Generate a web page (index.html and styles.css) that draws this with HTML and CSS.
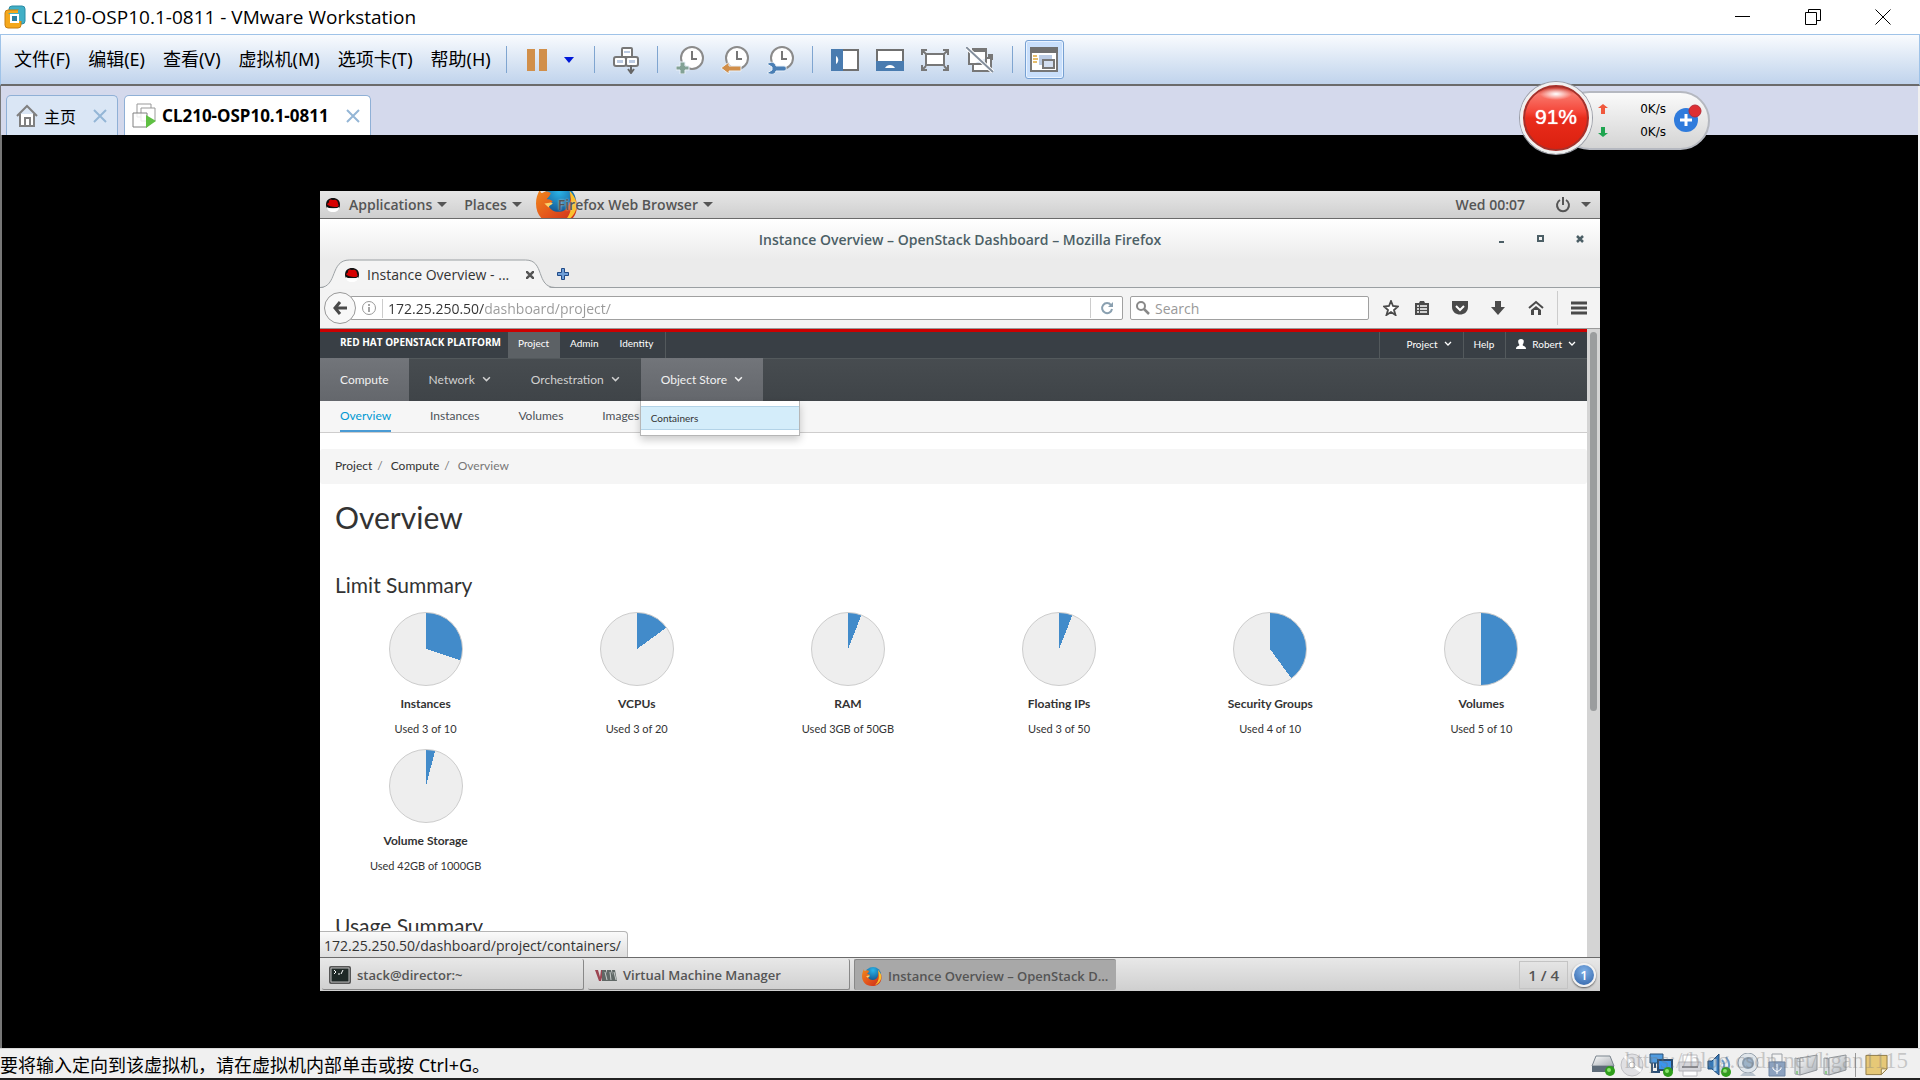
FILE: index.html
```html
<!DOCTYPE html>
<html lang="zh-CN">
<head>
    <meta charset="UTF-8">
    <meta name="viewport" content="width=device-width, initial-scale=1.0">
    <title>CL210-OSP10.1-0811 - VMware Workstation</title>
    <link rel="stylesheet" href="styles.css">
</head>
<body>
    <!-- Shared icons -->
    <svg class="defs" width="0" height="0" aria-hidden="true">
        <defs>
            <radialGradient id="foxGlobe" cx="0.5" cy="0.2" r="0.8">
                <stop offset="0" stop-color="#2bb5e8"/>
                <stop offset="1" stop-color="#0d3f7d"/>
            </radialGradient>
            <linearGradient id="foxTail" x1="0" y1="0" x2="1" y2="1">
                <stop offset="0" stop-color="#f08a1d"/>
                <stop offset="0.5" stop-color="#e4561b"/>
                <stop offset="1" stop-color="#c8281c"/>
            </linearGradient>
            <linearGradient id="metal" x1="0" y1="0" x2="1" y2="1">
                <stop offset="0" stop-color="#fafafa"/>
                <stop offset="1" stop-color="#a9afb5"/>
            </linearGradient>
        </defs>
        <symbol id="redhat" viewBox="0 0 14 14">
            <path d="M0 7C0 2 3 0 7 0s7 2 7 7c0 2-1 3-1 3H1S0 9 0 7z" fill="#111"/>
            <path d="M1 9c3 2 8 3 12 0 0 3-2 5-6 5s-6-2-6-5z" fill="#fff"/>
            <path d="M1 6c1-1 2-1 2-2 0-2 1-3 3-2l2 0c3-1 4 2 4 4 1 1 1 3-2 3C6 9 2 8 1 6z" fill="#d60000"/>
        </symbol>
        <symbol id="firefox" viewBox="0 0 20 20">
            <circle cx="11" cy="9" r="8" fill="url(#foxGlobe)"/>
            <path d="M2 3c0 1 0 2 1 2 1-1 3-1 4 0 0 1-1 2-2 3 1 0 2 0 3 1-1 1-2 1-2 2 1 3 5 4 8 2 2-2 3-5 2-8 2 2 2 4 3 3 2 7-2 12-9 12C4 20 0 16 0 10c0-3 1-5 2-7z" fill="url(#foxTail)"/>
            <path d="M16 4c2 2 4 5 3 9-1 3-3 5-6 6 3-3 5-6 3-15z" fill="#fbc02d"/>
            <path d="M4 10c2 0 3-1 4 0-1 1-2 1-2 2z" fill="#fbd26a"/>
        </symbol>
        <symbol id="clock" viewBox="0 0 28 28">
            <circle cx="16" cy="12" r="11" fill="#fff" stroke="#8b8b8b" stroke-width="2"/>
            <path d="M16 5v8h5" fill="none" stroke="#777" stroke-width="2"/>
        </symbol>
        <symbol id="chevron" viewBox="0 0 8 8">
            <path d="M1 2l3 3 3-3" fill="none" stroke="currentColor" stroke-width="1.3"/>
        </symbol>
        <symbol id="closeX" viewBox="0 0 14 14">
            <path d="M1 1l12 12M13 1L1 13" fill="none" stroke="currentColor" stroke-width="2"/>
        </symbol>
        <symbol id="led" viewBox="0 0 10 10">
            <circle cx="5" cy="5" r="5" fill="#2f9e1c"/>
            <circle cx="4" cy="4" r="2" fill="#8be86f"/>
        </symbol>
        <symbol id="folder" viewBox="0 0 24 24">
            <path d="M1 5l5 1v16l-5-1z" fill="#d8dde0" stroke="#989da2"/>
            <path d="M6 5l17-3v15L6 22z" fill="url(#metal)" stroke="#8f9499"/>
            <path d="M3 18v3" stroke="#8fc98a" stroke-width="2"/>
        </symbol>
    </svg>

    <!-- Window title -->
    <header class="titlebar">
        <svg class="app-icon" viewBox="0 0 22 24">
            <rect x="5" y="1" width="16" height="18" rx="3" fill="#41afc6" stroke="#2a8ba5"/>
            <rect x="1" y="5" width="16" height="18" rx="3" fill="#f5a81c" stroke="#c87f10"/>
            <path d="M4 8h10V5h4v11h-4" fill="#41afc6"/>
            <rect x="6" y="9" width="9" height="9" fill="#fff"/>
            <rect x="8" y="11" width="5" height="5" fill="#2c7fa1"/>
        </svg>
        <span class="window-title">CL210-OSP10.1-0811 - VMware Workstation</span>
        <div class="window-buttons">
            <button aria-label="Minimize"><svg viewBox="0 0 16 16"><path d="M0 7.500h15" stroke="#000"/></svg></button>
            <button aria-label="Restore"><svg viewBox="0 0 16 16"><path d="M.5 3.500h11v12H.5zM3.500 3V.5h12v11H12" fill="none" stroke="#000"/></svg></button>
            <button aria-label="Close"><svg viewBox="0 0 16 16"><path d="M.5.5l15 15M15.500.5l-15 15" stroke="#000"/></svg></button>
        </div>
    </header>

    <!-- Menu and toolbar -->
    <nav class="menubar">
        <div class="menus">
            <button>文件(F)</button>
            <button>编辑(E)</button>
            <button>查看(V)</button>
            <button>虚拟机(M)</button>
            <button>选项卡(T)</button>
            <button>帮助(H)</button>
        </div>
        <div class="tools tools-power">
            <button aria-label="Suspend"><svg width="20" height="22" viewBox="0 0 20 22"><path d="M0 0h8v22H0zM12 0h8v22h-8z" fill="#d18f4a"/></svg></button>
            <button aria-label="Power options"><svg width="10" height="6" viewBox="0 0 10 6"><path d="M0 0h10L5 6z" fill="#0018d8"/></svg></button>
        </div>
        <div class="tools">
            <button aria-label="Send Ctrl+Alt+Del"><svg width="26" height="28" viewBox="0 0 26 28"><g fill="#fff" stroke="#777" stroke-width="2"><rect x="9" y="2" width="10" height="9" rx="1"/><rect x="1" y="11" width="12" height="9" rx="2"/><rect x="13" y="11" width="12" height="9" rx="2"/></g><path d="M11 5h6v2h-6zM4 14h6v3H4zM16 14h6v3h-6z" fill="#bccbe2"/><path d="M18 19v7M15 23l3 4 3-4" fill="none" stroke="#666" stroke-width="2"/></svg></button>
        </div>
        <div class="tools">
            <button aria-label="Take snapshot"><svg width="28" height="28" viewBox="0 0 28 28"><use href="#clock"/><path d="M4 16h5v4h4v4H9v4H4v-4H0v-4h4z" fill="#83a295" stroke="#e8f0f8" stroke-width="1"/></svg></button>
            <button aria-label="Revert snapshot"><svg width="28" height="28" viewBox="0 0 28 28"><use href="#clock"/><path d="M0 22l8-6v4h12v5H8v3z" fill="#d18f4a" stroke="#e8f0f8" stroke-width="1"/></svg></button>
            <button aria-label="Manage snapshots"><svg width="28" height="28" viewBox="0 0 28 28"><use href="#clock"/><path d="M1 18c4-3 8-2 9 2h8c3 0 3 5 0 5h-8c-1 4-5 4-9 2l5-3v-3z" fill="#4a7fb5" stroke="#e8f0f8" stroke-width="1"/></svg></button>
        </div>
        <div class="tools">
            <button aria-label="Show library"><svg width="28" height="22" viewBox="0 0 28 22"><path d="M1 1h26v20H1z" fill="#fff" stroke="#707070" stroke-width="2"/><path d="M0 0h12v22H0z" fill="#4a7cb0"/><path d="M5 7c3 2 3 6 0 8z" fill="#fff"/></svg></button>
            <button aria-label="Show thumbnail bar"><svg width="28" height="22" viewBox="0 0 28 22"><path d="M1 1h26v20H1z" fill="#fff" stroke="#707070" stroke-width="2"/><path d="M0 12h28v10H0z" fill="#4a7cb0"/><path d="M9 19c2-4 8-4 10 0z" fill="#fff"/></svg></button>
            <button aria-label="Full screen"><svg width="28" height="22" viewBox="0 0 28 22"><path d="M5 5h18v11H5z" fill="#fff" stroke="#777" stroke-width="2"/><path d="M1 6V1h5M1 1l4 4M22 1h5v5M27 1l-4 4M1 16v5h5M1 21l4-4M22 21h5v-5M27 21l-4-4" fill="none" stroke="#777" stroke-width="2"/></svg></button>
            <button aria-label="Unity"><svg width="28" height="26" viewBox="0 0 28 26"><path d="M6 1h15v4H6zM22 7h5v6h-5z" fill="#777"/><path d="M3 4h17v13H3zM7 17v7h18V11h-5" fill="#fff" stroke="#777" stroke-width="2"/><path d="M0 0l27 25" stroke="#fff" stroke-width="4"/><path d="M0 0l27 25" stroke="#848f9c" stroke-width="2"/></svg></button>
        </div>
        <div class="tools">
            <button class="pressed" aria-label="Console view"><svg width="28" height="25" viewBox="0 0 28 25"><path d="M1 1h26v23H1z" fill="#fff" stroke="#777" stroke-width="2"/><path d="M0 0h28v6H0z" fill="#707070"/><path d="M3 9h4M3 12h5M3 15h4" stroke="#e5bd6c" stroke-width="2"/><path d="M9 8h13v10H9z" fill="#bccce4"/><path d="M13 13h11v8H13z" fill="#d3dff2" stroke="#777" stroke-width="2"/></svg></button>
        </div>
    </nav>

    <!-- VM tabs -->
    <div class="vm-tabs">
        <div class="vm-tab">
            <svg width="22" height="23" viewBox="0 0 22 23"><path d="M4 10v12h14V10" fill="#fff" stroke="#808080" stroke-width="2"/><path d="M1 12L11 2l10 10M9 22v-8h5v8" fill="none" stroke="#808080" stroke-width="2"/></svg>
            <a href="#">主页</a>
            <button aria-label="Close"><svg width="14" height="14"><use href="#closeX"/></svg></button>
        </div>
        <div class="vm-tab active">
            <svg width="24" height="25" viewBox="0 0 24 25"><path d="M5 1h14v13H5z" fill="#fff" stroke="#999"/><path d="M9 5h14v13H9z" fill="#fff" stroke="#999"/><path d="M1 10h14v14H1z" fill="#fff" fill-opacity=".8" stroke="#808080"/><path d="M14 12l10 6-10 7z" fill="#5fc043"/></svg>
            <a href="#">CL210-OSP10.1-0811</a>
            <button aria-label="Close"><svg width="14" height="14"><use href="#closeX"/></svg></button>
        </div>
    </div>

    <!-- Network speed widget -->
    <aside class="speed">
        <div class="speed-pill">
            <div class="speed-row">
                <svg width="10" height="10" viewBox="0 0 10 10"><path d="M5 0l5 4H7v6H3V4H0z" fill="#f0583c"/></svg>
                <span>0K/s</span>
            </div>
            <div class="speed-row">
                <svg width="10" height="10" viewBox="0 0 10 10"><path d="M5 10l5-4H7V0H3v6H0z" fill="#1fa550"/></svg>
                <span>0K/s</span>
            </div>
        </div>
        <div class="speed-ball">91%</div>
        <button class="speed-plus" aria-label="More"><svg viewBox="0 0 28 32"><circle cx="12" cy="18" r="12" fill="#2f7bdc"/><path d="M12 12v12M6 18h12" stroke="#fff" stroke-width="3"/><circle cx="21" cy="9" r="6" fill="#dd2f33" stroke="#b82a36"/></svg></button>
    </aside>

    <!-- Guest console -->
    <main class="console">
        <div class="guest">
            <div class="panel">
                <svg width="14" height="14"><use href="#redhat"/></svg>
                <button class="panel-apps">Applications</button>
                <button class="panel-places">Places</button>
                <button class="panel-browser">
                    <svg class="panel-fox" width="42" height="27" viewBox="0 4 20 13" preserveAspectRatio="none"><use href="#firefox" width="20" height="20"/></svg>
                    <span>Firefox Web Browser</span>
                </button>
                <span class="panel-clock">Wed 00:07</span>
                <button class="panel-power" aria-label="Power"><svg width="16" height="16" viewBox="0 0 16 16"><path d="M5 3a6 6 0 1 0 6 0M8 0v8" fill="none" stroke="#555" stroke-width="2"/></svg></button>
            </div>

            <div class="browser-top">
                <div class="browser-title">
                    <h1>Instance Overview – OpenStack Dashboard – Mozilla Firefox</h1>
                    <div class="browser-buttons">
                        <button aria-label="Minimize"><svg width="8" height="8" viewBox="0 0 8 8"><path d="M1 7h5" stroke="#4c5f66" stroke-width="2"/></svg></button>
                        <button aria-label="Maximize"><svg width="8" height="8" viewBox="0 0 8 8"><path d="M1 1h5v5H1z" fill="none" stroke="#4c5f66" stroke-width="2"/></svg></button>
                        <button aria-label="Close"><svg width="8" height="8" viewBox="0 0 8 8"><path d="M1 1l6 6M7 1L1 7" stroke="#4c5f66" stroke-width="2.500"/></svg></button>
                    </div>
                </div>
                <div class="browser-tabs">
                    <div class="browser-tab">
                        <svg class="tab-shape" viewBox="0 0 240 30" preserveAspectRatio="none"><path d="M0 29C16 29 10 1 30 1h180c20 0 12 28 28 28v2H0z" fill="#f4f4f4"/><path d="M0 28.500C18 28 10 1 30 1h180c20 0 10 27 30 27.500" fill="none" stroke="#9a9fa2"/></svg>
                        <svg width="14" height="14"><use href="#redhat"/></svg>
                        <a href="#">Instance Overview - ...</a>
                        <button aria-label="Close tab"><svg width="8" height="8" viewBox="0 0 8 8"><path d="M0 0l8 8M8 0L0 8" stroke="#555" stroke-width="2.500"/></svg></button>
                    </div>
                    <button aria-label="New tab"><svg width="12" height="12" viewBox="0 0 12 12"><path d="M4.500.5h3v4h4v3h-4v4h-3v-4h-4v-3h4z" fill="#6f9fd8" stroke="#204a87"/></svg></button>
                </div>
            </div>

            <div class="browser-nav">
                <button class="back" aria-label="Back"><svg width="16" height="16" viewBox="0 0 16 16"><path d="M8 2L3 8l5 6M3 8h12" fill="none" stroke="#4a4a4a" stroke-width="3"/></svg></button>
                <div class="urlbar">
                    <svg width="14" height="14" viewBox="0 0 14 14"><circle cx="7" cy="7" r="6.500" fill="none" stroke="#999"/><path d="M7 3v2M7 6v5" stroke="#888" stroke-width="1.500"/></svg>
                    <input type="text" aria-label="Address" value="172.25.250.50/dashboard/project/">
                    <button aria-label="Reload"><svg width="14" height="14" viewBox="0 0 14 14"><path d="M11 4a5 5 0 1 0 1 4" fill="none" stroke="#8aa0b0" stroke-width="2"/><path d="M13 1v5H8z" fill="#8aa0b0"/></svg></button>
                </div>
                <div class="searchbar">
                    <svg width="14" height="14" viewBox="0 0 14 14"><circle cx="5" cy="5" r="4" fill="none" stroke="#888" stroke-width="2"/><path d="M8 8l5 5" stroke="#888" stroke-width="2.500"/></svg>
                    <input type="text" aria-label="Search" placeholder="Search">
                </div>
                <div class="browser-tools">
                    <button aria-label="Bookmark"><svg width="16" height="16" viewBox="0 0 16 16"><path d="M8 1l2 5 5 .5-4 3.500 1.500 5L8 12l-4.500 3L5 10 1 6.500 6 6z" fill="#fff" stroke="#4a4a4a" stroke-width="1.800"/></svg></button>
                    <button aria-label="Bookmark list"><svg width="16" height="16" viewBox="0 0 16 16"><path d="M1 3h4l1-2h4l1 2h4v12H1z" fill="#4a4a4a"/><path d="M3 6h2M6 6h7M3 9h2M6 9h7M3 12h2M6 12h7" stroke="#fff" stroke-width="1.500"/></svg></button>
                    <button aria-label="Pocket"><svg width="16" height="16" viewBox="0 0 16 16"><path d="M0 1h16v6c0 10-16 10-16 0z" fill="#4a4a4a"/><path d="M4 6l4 4 4-4" fill="none" stroke="#fff" stroke-width="2"/></svg></button>
                    <button aria-label="Downloads"><svg width="16" height="16" viewBox="0 0 16 16"><path d="M5 1h6v6h4l-7 8-7-8h4z" fill="#4a4a4a"/></svg></button>
                    <button aria-label="Home"><svg width="16" height="16" viewBox="0 0 16 16"><path d="M1 8l7-6 7 6" fill="none" stroke="#4a4a4a" stroke-width="2"/><path d="M3 10l5-4 5 4v5h-3v-5H6v5H3z" fill="#4a4a4a"/></svg></button>
                    <button class="menu-button" aria-label="Menu"><svg width="16" height="14" viewBox="0 0 16 14"><path d="M0 2h16M0 7h16M0 12h16" stroke="#4a4a4a" stroke-width="3"/></svg></button>
                </div>
            </div>

            <div class="viewport">
                <div class="page">
                    <div class="topbar">
                        <a class="brand" href="#">RED HAT OPENSTACK PLATFORM</a>
                        <nav class="top-links">
                            <a class="active" href="#">Project</a>
                            <a href="#">Admin</a>
                            <a href="#">Identity</a>
                        </nav>
                        <nav class="top-user">
                            <a class="top-project" href="#">Project <svg width="8" height="8"><use href="#chevron"/></svg></a>
                            <a href="#">Help</a>
                            <a href="#"><svg width="10" height="10" viewBox="0 0 10 10"><path d="M5 0c4 0 3 4 1.500 6C7 7 10 7 10 10H0c0-3 3-3 3.500-4C2 4 1 0 5 0z" fill="#fff"/></svg> Robert <svg width="8" height="8"><use href="#chevron"/></svg></a>
                        </nav>
                    </div>
                    <nav class="mainnav">
                        <a class="active" href="#">Compute</a>
                        <a href="#">Network <svg width="9" height="9"><use href="#chevron"/></svg></a>
                        <a href="#">Orchestration <svg width="9" height="9"><use href="#chevron"/></svg></a>
                        <div class="dropdown">
                            <a class="active" href="#">Object Store <svg width="9" height="9"><use href="#chevron"/></svg></a>
                            <div class="dropdown-menu"><a href="#">Containers</a></div>
                        </div>
                    </nav>
                    <nav class="subnav">
                        <a class="active" href="#">Overview</a>
                        <a href="#">Instances</a>
                        <a href="#">Volumes</a>
                        <a href="#">Images</a>
                    </nav>
                    <div class="breadcrumb">
                        <a href="#">Project</a><span>/</span>
                        <a href="#">Compute</a><span>/</span>
                        <a class="current" href="#">Overview</a>
                    </div>
                    <h2>Overview</h2>
                    <h3>Limit Summary</h3>
                    <div class="quotas">
                        <div class="quota">
                            <div class="pie" style="--used: 30%"></div>
                            <strong>Instances</strong>
                            <span>Used 3 of 10</span>
                        </div>
                        <div class="quota">
                            <div class="pie" style="--used: 15%"></div>
                            <strong>VCPUs</strong>
                            <span>Used 3 of 20</span>
                        </div>
                        <div class="quota">
                            <div class="pie" style="--used: 6%"></div>
                            <strong>RAM</strong>
                            <span>Used 3GB of 50GB</span>
                        </div>
                        <div class="quota">
                            <div class="pie" style="--used: 6%"></div>
                            <strong>Floating IPs</strong>
                            <span>Used 3 of 50</span>
                        </div>
                        <div class="quota">
                            <div class="pie" style="--used: 40%"></div>
                            <strong>Security Groups</strong>
                            <span>Used 4 of 10</span>
                        </div>
                        <div class="quota">
                            <div class="pie" style="--used: 50%"></div>
                            <strong>Volumes</strong>
                            <span>Used 5 of 10</span>
                        </div>
                        <div class="quota">
                            <div class="pie" style="--used: 4%"></div>
                            <strong>Volume Storage</strong>
                            <span>Used 42GB of 1000GB</span>
                        </div>
                    </div>
                    <h3>Usage Summary</h3>
                </div>
                <div class="scrollbar"><div class="thumb"></div></div>
                <div class="link-status">172.25.250.50/dashboard/project/containers/</div>
            </div>

            <div class="taskbar">
                <button class="task"><svg width="22" height="19" viewBox="0 0 22 19"><rect x="1" y="1" width="20" height="16" rx="1" fill="#1f2826" stroke="#555" stroke-width="2"/><path d="M2 2h18v14H2z" fill="none" stroke="#bbb"/><path d="M5 4l2 2-2 2M9 8h2M14 4l-2 4" fill="none" stroke="#fff"/></svg>stack@director:~</button>
                <button class="task"><svg width="22" height="13" viewBox="0 0 22 13"><path d="M0 1h3l2 7 1-7h3L6 12H4z" fill="#9c4653"/><path d="M7 12V1h4l3 11zM12 12V1h4l3 11zM17 1h3l2 11h-4z" fill="#606866"/><path d="M10 3l2 8M15 3l1 8M19 3l2 8" stroke="#c8cccb"/></svg>Virtual Machine Manager</button>
                <button class="task current"><svg width="20" height="20"><use href="#firefox"/></svg><span>Instance Overview – OpenStack D...</span></button>
                <span class="workspace">1 / 4</span>
                <span class="notify">1</span>
            </div>
        </div>
    </main>

    <!-- Status bar -->
    <footer class="statusbar">
        <p>要将输入定向到该虚拟机，请在虚拟机内部单击或按 Ctrl+G。</p>
        <div class="devices">
            <svg viewBox="0 0 24 24"><path d="M5 3h14l4 10H1z" fill="url(#metal)" stroke="#7b858e"/><path d="M1 13h22v6H1z" fill="#5d6b78"/><use href="#led" x="14" y="13" width="10" height="10"/></svg>
            <svg viewBox="0 0 24 24"><circle cx="12" cy="12" r="11" fill="#e0e0e3" stroke="#c0c0c4"/><path d="M12 12L5 3M12 12l9 6" stroke="#fff" stroke-width="3"/><circle cx="12" cy="12" r="3" fill="#fff" stroke="#bbb"/></svg>
            <svg viewBox="0 0 24 24"><path d="M1 1h13v9H1z" fill="#4f9be0" stroke="#2a5077"/><path d="M3 10v9h8M6 10v5" fill="none" stroke="#2a5077" stroke-width="2"/><path d="M9 7h14v10H9z" fill="#3b94ec" stroke="#2a4a6c" stroke-width="2"/><use href="#led" x="14" y="14" width="10" height="10"/></svg>
            <svg viewBox="0 0 24 24"><path d="M5 2h14v8H5zM5 16h14v7H5z" fill="#fff" stroke="#bcbcc0"/><path d="M1 9h22v9H1z" fill="#d5d5da" stroke="#b4b4b9"/><path d="M4 14h16" stroke="#8c8c92" stroke-width="2"/></svg>
            <svg viewBox="0 0 24 24"><path d="M1 8h4l7-7v21l-7-6H1z" fill="#3778b5" stroke="#224c78"/><path d="M8 6v12" stroke="#a9cfee" stroke-width="3"/><path d="M15 7c3 3 3 7 0 10M19 4c4 5 4 11 0 16" fill="none" stroke="#6f9cc8" stroke-width="2"/><use href="#led" x="14" y="14" width="10" height="10"/></svg>
            <svg viewBox="0 0 24 24"><circle cx="12" cy="10" r="10" fill="#dfe5ea" stroke="#97a2ad"/><circle cx="12" cy="10" r="5" fill="#9db3c8" stroke="#8a9cae" stroke-width="2"/><path d="M7 20h10l3 3H4z" fill="#b9c3cc"/></svg>
            <svg viewBox="0 0 24 24"><path d="M7 1h10v8H7z" fill="#f3f3f3" stroke="#9a9fa5"/><path d="M4 9h16v14H4z" fill="#8ca2c0" stroke="#7187a5"/><path d="M12 11v10M8 14v2l4 3 4-3v-2" fill="none" stroke="#fff"/></svg>
            <svg><use href="#folder"/></svg>
            <svg><use href="#folder"/></svg>
            <svg class="note" viewBox="0 0 24 24"><path d="M1 2h22v14l-6 6H1z" fill="#e6c877" stroke="#8f7a45"/><path d="M23 16h-6v6z" fill="#fff6d8" stroke="#8f7a45"/></svg>
        </div>
        <div class="watermark">https://blog.csdn.net/ligan1115</div>
    </footer>
</body>
</html>
```
FILE: styles.css
```css
* {
    box-sizing: border-box;
}
body {
    display: flex;
    flex-direction: column;
    height: 100vh;
    margin: 0;
    overflow: hidden;
    background: #f0f0f0;
    color: #000;
    font-family: "Noto Sans", "Noto Sans CJK SC", sans-serif;
    font-size: 18px;
}
button {
    display: flex;
    align-items: center;
    justify-content: center;
    padding: 0;
    border: 0;
    background: none;
    color: inherit;
    font: inherit;
    white-space: nowrap;
}
a {
    color: inherit;
    text-decoration: none;
}
svg {
    display: block;
    flex: none;
}
.defs {
    position: absolute;
}

/* Window title */
.titlebar {
    display: flex;
    align-items: center;
    height: 34px;
    padding: 0 2px 0 4px;
    background: #fff;
}
.app-icon {
    width: 22px;
    height: 24px;
    margin-right: 5px;
}
.window-title {
    font-family: "Open Sans", sans-serif;
    font-size: 19px;
}
.window-buttons {
    display: flex;
    margin-left: auto;
}
.window-buttons button {
    width: 70px;
    height: 34px;
}
.window-buttons svg {
    width: 16px;
    height: 16px;
}

/* Menu and toolbar */
.menubar {
    display: flex;
    align-items: center;
    height: 52px;
    border: 1px solid #9fc3e8;
    border-bottom: 2px solid #6b6b6b;
    background: linear-gradient(#f9fbfe, #d6e3f3 60%, #c0d3ec);
}
.menus {
    display: flex;
    gap: 18px;
    padding: 0 15px 4px 13px;
}
.tools {
    display: flex;
    align-items: center;
    gap: 17px;
    height: 27px;
    padding: 0 18px;
    border-left: 1px solid #7fa5d0;
}
.tools-power {
    padding: 0 20px;
}
.tools:last-child {
    padding: 0 12px;
}
.pressed {
    width: 39px;
    height: 39px;
    border: 1px solid #76a0d2;
    border-radius: 3px;
    background: #c9dffb;
    box-shadow: inset 0 0 0 1px #e9f3ff;
}

/* VM tabs */
.vm-tabs {
    display: flex;
    align-items: flex-end;
    gap: 6px;
    height: 49px;
    margin-right: 2px;
    padding-left: 5px;
    border-left: 1px solid #777;
    background: #d4d9ec;
}
.vm-tab {
    display: flex;
    align-items: center;
    gap: 6px;
    height: 40px;
    padding: 0 10px 0 9px;
    border: 1px solid #8fb0d6;
    border-bottom: 0;
    border-radius: 5px 5px 0 0;
    background: #dae6f5;
    font-family: "Noto Sans CJK SC", sans-serif;
    font-size: 16px;
}
.vm-tab button {
    margin-left: 11px;
    color: #94b6d6;
}
.vm-tab.active {
    padding-left: 7px;
    background: #fff;
    font-family: "Noto Sans", sans-serif;
    font-size: 17px;
    font-weight: 700;
}

/* Network speed widget floats over the tabs */
.speed {
    position: absolute;
    top: 82px;
    right: 210px;
    width: 190px;
    height: 72px;
}
.speed-pill {
    position: absolute;
    inset: 9px 0 4px 40px;
    display: flex;
    flex-direction: column;
    justify-content: center;
    gap: 5px;
    padding: 0 42px 0 36px;
    border: 2px solid #b5b8c0;
    border-radius: 30px;
    background: linear-gradient(#fafafa, #d4d4d4);
}
.speed-row {
    display: flex;
    align-items: center;
    justify-content: space-between;
    font-family: "DejaVu Sans", sans-serif;
    font-size: 12px;
    line-height: 18px;
}
.speed-ball {
    position: absolute;
    left: 0;
    top: 0;
    width: 72px;
    height: 72px;
    border: 3px solid #f0f0f0;
    border-radius: 50%;
    background: radial-gradient(ellipse 16px 6px at 50% 9px, #fff, transparent), linear-gradient(#b52a20, #f9786c 14%, #f5473a 40%, #ea2c1c 50%, #d9200e);
    box-shadow: inset 0 0 0 2px #a3322c, 0 0 0 1px #9a9da6;
    color: #fff;
    font-family: "Liberation Sans", sans-serif;
    font-size: 21px;
    line-height: 64px;
    text-align: center;
    text-shadow: 0 0 1px #fff;
}
.speed-plus {
    position: absolute;
    right: 8px;
    top: 20px;
}
.speed-plus svg {
    width: 28px;
    height: 32px;
}

/* Guest console */
.console {
    display: flex;
    flex: 1;
    min-height: 0;
    margin-right: 2px;
    padding: 56px 318px 57px;
    border-left: 2px solid #777;
    background: #000;
}
.guest {
    display: flex;
    flex: 1;
    flex-direction: column;
    min-width: 0;
    background: #fff;
    color: #333;
    font-family: "Open Sans", sans-serif;
    font-size: 14px;
}
.panel {
    display: flex;
    align-items: center;
    height: 28px;
    padding: 0 9px 0 6px;
    border-bottom: 1px solid #6b6b6b;
    background: linear-gradient(#e6e6e6, #cfcfcf);
    color: #555;
    font-weight: 600;
}
.panel button::after {
    width: 0;
    margin-left: 5px;
    border: 5px solid transparent;
    border-top-color: #555;
    border-bottom: 0;
    content: "";
}
.panel-apps {
    margin: 0 17px 0 9px;
}
.panel-browser {
    margin-left: 14px;
}
.panel-fox {
    margin-right: -20px;
}
.panel-browser span {
    position: relative;
    text-shadow: 0 0 2px #ddd;
}
.panel-clock {
    margin-left: auto;
}
.panel .panel-power {
    gap: 5px;
    margin-left: 30px;
}

/* Browser window */
.browser-top {
    height: 69px;
    border-bottom: 1px solid #9a9fa2;
    background: linear-gradient(#fff, #ebebeb 60%);
}
.browser-title {
    display: grid;
    grid-template-columns: 1fr auto 1fr;
    align-items: center;
    height: 40px;
    padding-right: 16px;
    padding-left: 16px;
}
.browser-title h1 {
    grid-column: 2;
    margin: 0;
    color: #4c5f66;
    font-size: 14px;
    font-weight: 600;
}
.browser-buttons {
    display: flex;
    gap: 31px;
    justify-content: flex-end;
}
.browser-tabs {
    display: flex;
    align-items: center;
    height: 29px;
    gap: 2px;
}
.browser-tab {
    position: relative;
    display: flex;
    align-items: center;
    width: 235px;
    height: 29px;
    padding: 2px 21px 0 25px;
}
.browser-tab .tab-shape {
    position: absolute;
    inset: 0;
    width: 100%;
    height: 30px;
}
.browser-tab > :not(.tab-shape) {
    position: relative;
}
.browser-tab a {
    margin-left: 8px;
}
.browser-tab button {
    margin-left: auto;
}
.browser-nav {
    display: flex;
    align-items: center;
    height: 41px;
    padding: 0 13px 0 4px;
    border-bottom: 1px solid #9a9a9a;
    background: #f3f3f3;
}
.back {
    position: relative;
    width: 32px;
    height: 32px;
    border: 1px solid #999;
    border-radius: 50%;
    background: #f8f8f8;
}
.urlbar,
.searchbar {
    display: flex;
    align-items: center;
    height: 24px;
    border: 1px solid #a0a0a0;
    border-radius: 2px;
    background: #fff;
}
.urlbar {
    flex: 1;
    margin: 0 7px 0 -6px;
    padding-left: 11px;
}
.urlbar input,
.searchbar input {
    flex: 1;
    min-width: 0;
    padding: 0;
    border: 0;
    outline: 0;
    background: none;
    color: #333;
    font: inherit;
}
/* Host part is dark, path is grey */
.urlbar input {
    margin-left: 6px;
    padding-left: 5px;
    border-left: 1px solid #ccc;
    background: linear-gradient(to right, #333 101px, #999 101px);
    -webkit-background-clip: text;
    background-clip: text;
    -webkit-text-fill-color: transparent;
}
.urlbar button {
    width: 32px;
    height: 20px;
    border-left: 1px solid #ccc;
}
.searchbar {
    flex: 0 1 239px;
    gap: 5px;
    padding: 0 5px;
}
.searchbar input::placeholder {
    color: #999;
}
.browser-tools {
    display: flex;
    align-items: center;
    gap: 22px;
    margin-left: 14px;
}
.browser-tools button:nth-child(2) {
    margin-left: -7px;
}
.menu-button {
    height: 34px;
    padding-left: 13px;
    margin-left: -9px;
    border-left: 1px solid #ccc;
}

/* Dashboard page */
.viewport {
    position: relative;
    display: flex;
    flex: 1;
    min-height: 0;
}
.page {
    flex: 1;
    min-width: 0;
    overflow: hidden;
    border-top: 3px solid #c00;
    font-family: Lato, sans-serif;
    font-size: 12px;
}
.topbar {
    display: flex;
    height: 26px;
    padding-left: 20px;
    background: #393f45;
    color: #fff;
    font-size: 10px;
    line-height: 22px;
}
.brand {
    margin-right: 7px;
    font-family: "Open Sans", sans-serif;
    font-size: 10px;
    font-weight: 700;
    line-height: 20px;
}
.top-links {
    display: flex;
    border-right: 1px solid #53595c;
}
.top-links a {
    padding: 0 11px 0 10px;
}
.top-links .active {
    background: #5c6165;
}
.top-user {
    display: flex;
    margin-left: auto;
}
.top-user a {
    display: flex;
    align-items: center;
    gap: 6px;
    padding: 0 11px 2px 10px;
    border-left: 1px solid #53595c;
}
.top-user .top-project {
    padding-left: 26px;
}
.mainnav {
    display: flex;
    height: 43px;
    border-top: 1px solid #53595c;
    background: linear-gradient(#474c50, #3f4448);
    color: #d1d1d1;
}
.mainnav > a,
.dropdown > a {
    display: flex;
    align-items: center;
    gap: 7px;
    height: 43px;
    margin-top: -1px;
    padding: 0 20px;
}
.mainnav .active {
    background: linear-gradient(#72757a, #64676c);
    color: #f1f1f1;
}
.dropdown {
    position: relative;
    margin-left: 1px;
}
.dropdown-menu {
    position: absolute;
    top: 42px;
    left: -1px;
    z-index: 1;
    width: 160px;
    padding: 5px 0;
    border: 1px solid #b6b6b6;
    border-top: 0;
    background: #fff;
    box-shadow: 0 4px 8px rgba(0, 0, 0, 0.2);
    color: #333;
    font-size: 10px;
    line-height: 22px;
}
.dropdown-menu a {
    display: block;
    padding: 0 10px;
    border: solid #b3d3e7;
    border-width: 1px 0;
    background: #d4edfa;
}
.subnav {
    display: flex;
    gap: 39px;
    height: 32px;
    padding: 0 20px;
    border-bottom: 1px solid #cecdcd;
    background: #f6f6f6;
    color: #4d5258;
    line-height: 30px;
}
.subnav .active {
    border-bottom: 2px solid #4a9bd4;
    color: #0099d3;
}
.breadcrumb {
    display: flex;
    height: 35px;
    margin-top: 16px;
    padding: 0 15px;
    border-radius: 3px;
    background: #f5f5f5;
    line-height: 34px;
}
.breadcrumb span {
    padding: 0 8px 0 5px;
    color: #777;
}
.breadcrumb .current {
    color: #777;
}
.page h2 {
    margin: 15px 15px 0;
    font-size: 30px;
    font-weight: 400;
    line-height: 36px;
}
.page h3 {
    margin: 37px 15px 0;
    font-size: 21px;
    font-weight: 400;
    line-height: 26px;
}
.quotas {
    display: grid;
    grid-template-columns: repeat(6, 1fr);
    row-gap: 12px;
    margin-top: 14px;
    padding-bottom: 2px;
}
.quota {
    display: flex;
    flex-direction: column;
    align-items: center;
    height: 125px;
    font-size: 11px;
}
.quota strong {
    margin: 10px 0 9px;
    font-size: 12px;
    line-height: 16px;
}
.quota span {
    line-height: 16px;
}
.pie {
    width: 74px;
    height: 74px;
    border: 1px solid #ccc;
    border-radius: 50%;
    background: conic-gradient(#428bca var(--used), #eee 0);
}
.scrollbar {
    width: 13px;
    padding: 3px;
    background: #d4d4d4;
}
.thumb {
    height: 61%;
    border-radius: 4px;
    background: #9b9d9e;
}
.link-status {
    position: absolute;
    bottom: 0;
    left: 0;
    height: 26px;
    padding: 0 6px 0 4px;
    border: 1px solid #b5b5b5;
    border-width: 1px 1px 0 0;
    border-radius: 0 4px 0 0;
    background: linear-gradient(#fafafa, #dedede);
    line-height: 27px;
}

/* Guest taskbar */
.taskbar {
    display: flex;
    align-items: center;
    gap: 4px;
    height: 34px;
    padding: 0 4px 0 2px;
    border-top: 1px solid #6b6b6b;
    background: linear-gradient(#e8e8e8, #cfcfcf);
    color: #555;
    font-weight: 600;
}
.task {
    flex: 0 1 262px;
    gap: 6px;
    justify-content: flex-start;
    height: 31px;
    padding: 2px 0 0 7px;
    border: solid #888;
    border-width: 0 1px 1px 0;
    border-radius: 2px;
    font-size: 13px;
}
.task.current {
    border-width: 1px 0 0 1px;
    background: #a8a8a8;
}
.workspace {
    margin-left: auto;
    padding: 3px 8px;
    border: 1px solid #c4c4c4;
    font-size: 15px;
}
.notify {
    width: 24px;
    height: 24px;
    border: 2px solid #f2f2f2;
    border-radius: 50%;
    background: radial-gradient(circle at 50% 30%, #7fb0e6, #2f62a8);
    box-shadow: 0 1px 2px #555;
    color: #fff;
    font-size: 13px;
    line-height: 20px;
    text-align: center;
}

/* Status bar */
.statusbar {
    position: relative;
    display: flex;
    align-items: center;
    height: 32px;
    border-top: 1px solid #d8d8d8;
    border-bottom: 2px solid #222;
    background: #f0f0f0;
}
.statusbar p {
    margin: 0;
}
.devices {
    display: flex;
    gap: 5px;
    margin: 0 32px 0 auto;
    padding-top: 2px;
}
.devices svg {
    width: 24px;
    height: 24px;
}
.devices .note {
    width: 33px;
    margin-left: 3px;
    padding-left: 9px;
    border-left: 1px solid #999;
}
.watermark {
    position: absolute;
    right: 12px;
    top: 0;
    color: rgba(120, 120, 120, 0.35);
    font-family: "Liberation Serif", serif;
    font-size: 23px;
    line-height: 24px;
}
```
